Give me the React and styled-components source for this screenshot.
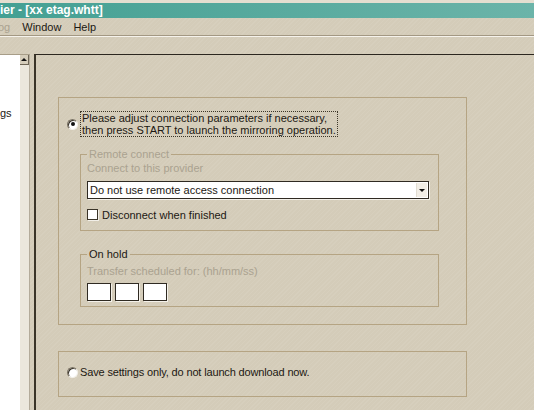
import React from 'react';
import styled, { createGlobalStyle, css } from 'styled-components';

const GlobalStyle = createGlobalStyle`
  html, body {
    margin: 0;
    padding: 0;
  }
  body {
    width: 534px;
    height: 410px;
    overflow: hidden;
    font-family: "Liberation Sans", Arial, sans-serif;
    font-size: 11px;
    color: #1c1812;
  }
`;

const texture = css`
  background-color: #d4ccb9;
  background-image: repeating-linear-gradient(
    135deg,
    rgba(255, 255, 255, 0.06) 0 1px,
    transparent 1px 3px
  );
`;

const Window = styled.div`
  width: 534px;
  height: 410px;
  display: flex;
  flex-direction: column;
  overflow: hidden;
  ${texture}
`;

const TitleBar = styled.div`
  height: 15px;
  border-top: 3px solid #e4ded0;
  background: linear-gradient(90deg, #44a093, #6bb4a9);
  color: #fff;
  font-weight: bold;
  font-size: 12px;
  line-height: 15px;
  white-space: nowrap;
`;

const MenuBar = styled.div`
  height: 17px;
  display: flex;
  align-items: center;
  border-bottom: 1px solid #a39883;
`;

const MenuItem = styled.span`
  padding: 0 6px;
  color: ${p => (p.$disabled ? '#aaa290' : '#1c1812')};
  &:first-child {
    margin-left: -8px;
  }
`;

const Toolbar = styled.div`
  height: 17px;
  border-top: 1px solid #f6f3ec;
`;

const Body = styled.div`
  flex: 1;
  display: flex;
  min-height: 0;
`;

const LeftPane = styled.div`
  width: 20px;
  background: #fff;
  border-top: 1px solid #a79d88;
  overflow: hidden;
`;

const TreeItem = styled.div`
  margin-top: 52px;
  line-height: 13px;
  white-space: nowrap;
`;

const Scrollbar = styled.div`
  width: 9px;
  background: #ebe7dc;
  border-top: 1px solid #a79d88;
  border-right: 1px solid #b3ab9a;
`;

const ScrollButton = styled.div`
  box-sizing: border-box;
  height: 10px;
  display: flex;
  align-items: center;
  justify-content: center;
  ${texture}
  border-right: 1px solid #6e6656;
  border-bottom: 1px solid #6e6656;

  &::after {
    content: '';
    border-left: 3px solid transparent;
    border-right: 3px solid transparent;
    border-bottom: 3px solid #111;
  }
`;

const Splitter = styled.div`
  width: 4px;
`;

const Content = styled.div`
  flex: 1;
  border-top: 1px solid #2c271f;
  border-left: 2px solid #3a3428;
  padding: 42px 0 0 22px;
`;

const Group = styled.div`
  box-sizing: border-box;
  width: 409px;
  height: ${p => p.$height}px;
  border: 1px solid #b5a483;
  padding-left: 8px;
`;

const MainGroup = styled(Group)`
  padding-top: 13px;
`;

const BottomGroup = styled(Group)`
  margin-top: 26px;
  display: flex;
  align-items: center;
  padding-bottom: 4px;
`;

const OptionRow = styled.div`
  display: flex;
  align-items: center;
`;

const Radio = styled.span`
  box-sizing: border-box;
  width: 11px;
  height: 11px;
  flex: none;
  border-radius: 50%;
  background: #fff;
  border: 1px solid;
  border-color: #7a7262 #f2efe8 #f2efe8 #7a7262;
  box-shadow: inset 1px 1px 0 #3a352b;
  display: flex;
  align-items: center;
  justify-content: center;

  &::after {
    content: '';
    width: 4px;
    height: 4px;
    border-radius: 50%;
    background: ${p => (p.$checked ? '#111' : 'transparent')};
  }
`;

const Label = styled.span`
  line-height: 12px;
  margin-left: ${p => (p.$focus ? 2 : 0)}px;
  padding: 0 1px;
  letter-spacing: ${p => p.$tight || 0}px;
  border: 1px ${p => (p.$focus ? 'dotted #3c3628' : 'solid transparent')};
`;

const Fieldset = styled.fieldset`
  box-sizing: border-box;
  width: 359px;
  margin: ${p => p.$top}px 0 0 13px;
  padding: ${p => p.$padTop}px 6px ${p => p.$padBottom}px;
  border: 1px solid #b5a483;
  min-width: 0;
`;

const Legend = styled.legend`
  padding: 0 2px;
  line-height: 13px;
  color: ${p => (p.$disabled ? '#aaa290' : '#1c1812')};
`;

const Hint = styled.div`
  line-height: 13px;
  color: #aaa290;
`;

const Combo = styled.div`
  box-sizing: border-box;
  width: 342px;
  height: 18px;
  margin-top: 6px;
  background: #fff;
  border: 1px solid #2f2a22;
  box-shadow: 1px 1px 0 #f4f1ea;
  display: flex;
  align-items: center;
  padding-left: 2px;
`;

const ComboText = styled.span`
  flex: 1;
`;

const ComboButton = styled.span`
  width: 10px;
  height: 14px;
  margin-right: 1px;
  display: flex;
  align-items: center;
  justify-content: center;
  background: #f2eee6;
  border-left: 1px solid #e2ddd2;

  &::after {
    content: '';
    border-left: 3px solid transparent;
    border-right: 3px solid transparent;
    border-top: 3px solid #111;
  }
`;

const CheckRow = styled.div`
  display: flex;
  align-items: center;
  height: 13px;
  margin-top: 9px;
`;

const Checkbox = styled.span`
  box-sizing: border-box;
  width: 11px;
  height: 11px;
  margin-right: 4px;
  background: #fff;
  border: 1px solid #3a3428;
  box-shadow: 1px 1px 0 #f2efe8;
`;

const TimeRow = styled.div`
  display: flex;
  gap: 4px;
  margin-top: 5px;
`;

const TimeBox = styled.span`
  box-sizing: border-box;
  width: 24px;
  height: 18px;
  background: #fff;
  border: 1px solid #2f2a22;
  box-shadow: 1px 1px 0 #f4f1ea;
`;

export default function App() {
  return (
    <Window>
      <GlobalStyle />
      <TitleBar>ier - [xx etag.whtt]</TitleBar>
      <MenuBar>
        <MenuItem $disabled>og</MenuItem>
        <MenuItem>Window</MenuItem>
        <MenuItem>Help</MenuItem>
      </MenuBar>
      <Toolbar />
      <Body>
        <LeftPane>
          <TreeItem>gs</TreeItem>
        </LeftPane>
        <Scrollbar>
          <ScrollButton />
        </Scrollbar>
        <Splitter />
        <Content>
          <MainGroup $height={228}>
            <OptionRow>
              <Radio $checked />
              <Label $focus>
                Please adjust connection parameters if necessary,
                <br />
                then press START to launch the mirroring operation.
              </Label>
            </OptionRow>
            <Fieldset $top={11} $padTop={1} $padBottom={9}>
              <Legend $disabled>Remote connect</Legend>
              <Hint>Connect to this provider</Hint>
              <Combo>
                <ComboText>Do not use remote access connection</ComboText>
                <ComboButton />
              </Combo>
              <CheckRow>
                <Checkbox />
                Disconnect when finished
              </CheckRow>
            </Fieldset>
            <Fieldset $top={17} $padTop={4} $padBottom={5}>
              <Legend>On hold</Legend>
              <Hint>Transfer scheduled for: (hh/mm/ss)</Hint>
              <TimeRow>
                <TimeBox />
                <TimeBox />
                <TimeBox />
              </TimeRow>
            </Fieldset>
          </MainGroup>
          <BottomGroup $height={46}>
            <Radio />
            <Label $tight={-0.15}>Save settings only, do not launch download now.</Label>
          </BottomGroup>
        </Content>
      </Body>
    </Window>
  );
}
